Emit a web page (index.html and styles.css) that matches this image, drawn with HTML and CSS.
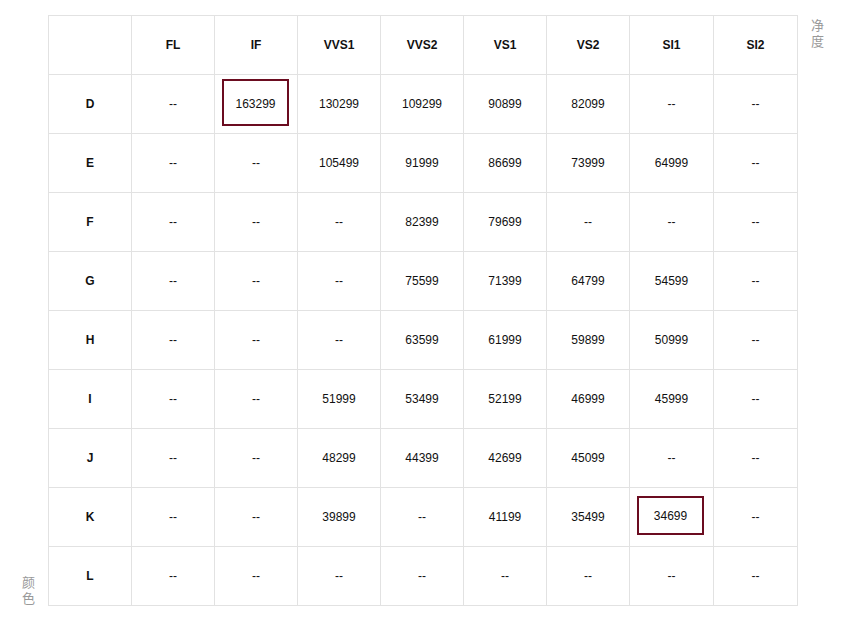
FILE: index.html
```html
<!DOCTYPE html>
<html lang="zh">
<head>
<meta charset="utf-8">
<link rel="stylesheet" href="styles.css">
</head>
<body>
<div class="wrap">
  <div class="axis axis-left">颜色</div>
  <table class="grid">
    <colgroup>
      <col class="c83"><col class="c83"><col class="c83"><col class="c83"><col class="c83"><col class="c83"><col class="c83"><col class="c84"><col class="c84">
    </colgroup>
    <thead>
      <tr><th></th><th>FL</th><th>IF</th><th>VVS1</th><th>VVS2</th><th>VS1</th><th>VS2</th><th>SI1</th><th>SI2</th></tr>
    </thead>
    <tbody>
      <tr><th>D</th><td>--</td><td><span class="mark mark-tall">163299</span></td><td>130299</td><td>109299</td><td>90899</td><td>82099</td><td>--</td><td>--</td></tr>
      <tr><th>E</th><td>--</td><td>--</td><td>105499</td><td>91999</td><td>86699</td><td>73999</td><td>64999</td><td>--</td></tr>
      <tr><th>F</th><td>--</td><td>--</td><td>--</td><td>82399</td><td>79699</td><td>--</td><td>--</td><td>--</td></tr>
      <tr><th>G</th><td>--</td><td>--</td><td>--</td><td>75599</td><td>71399</td><td>64799</td><td>54599</td><td>--</td></tr>
      <tr><th>H</th><td>--</td><td>--</td><td>--</td><td>63599</td><td>61999</td><td>59899</td><td>50999</td><td>--</td></tr>
      <tr><th>I</th><td>--</td><td>--</td><td>51999</td><td>53499</td><td>52199</td><td>46999</td><td>45999</td><td>--</td></tr>
      <tr><th>J</th><td>--</td><td>--</td><td>48299</td><td>44399</td><td>42699</td><td>45099</td><td>--</td><td>--</td></tr>
      <tr><th>K</th><td>--</td><td>--</td><td>39899</td><td>--</td><td>41199</td><td>35499</td><td><span class="mark mark-short">34699</span></td><td>--</td></tr>
      <tr><th>L</th><td>--</td><td>--</td><td>--</td><td>--</td><td>--</td><td>--</td><td>--</td><td>--</td></tr>
    </tbody>
  </table>
  <div class="axis axis-right">净度</div>
</div>
</body>
</html>
```

FILE: styles.css
```css
html, body {
  margin: 0;
  padding: 0;
  background: #fff;
}

.wrap {
  display: flex;
  align-items: stretch;
  padding-top: 15px;
  padding-left: 22px;
}

.axis {
  width: 14px;
  font-family: "Noto Sans CJK SC", "Noto Sans", sans-serif;
  font-size: 13px;
  line-height: 16px;
  color: #999;
  word-break: break-all;
}

.axis-left {
  align-self: flex-end;
  margin-right: 12px;
}

.axis-right {
  align-self: flex-start;
  margin-left: 13px;
  margin-top: 2px;
}

.grid {
  border-collapse: collapse;
  table-layout: fixed;
  width: 750px;
  font-family: "Liberation Sans", Arial, sans-serif;
  font-size: 12px;
  color: #111;
}

.c83 {
  width: 83px;
}

.c84 {
  width: 84px;
}

.grid th,
.grid td {
  border: 1px solid #e2e2e2;
  height: 58px;
  padding: 0;
  text-align: center;
  vertical-align: middle;
}

.grid th {
  font-weight: bold;
}

.grid tbody td {
  position: relative;
}

.mark {
  position: absolute;
  left: 7px;
  width: 63px;
  border: 2px solid #6b0c20;
  display: flex;
  align-items: center;
  justify-content: center;
}

.mark-tall {
  top: 4px;
  height: 40px;
  padding-top: 3px;
}

.mark-short {
  top: 8px;
  height: 35px;
}
```
